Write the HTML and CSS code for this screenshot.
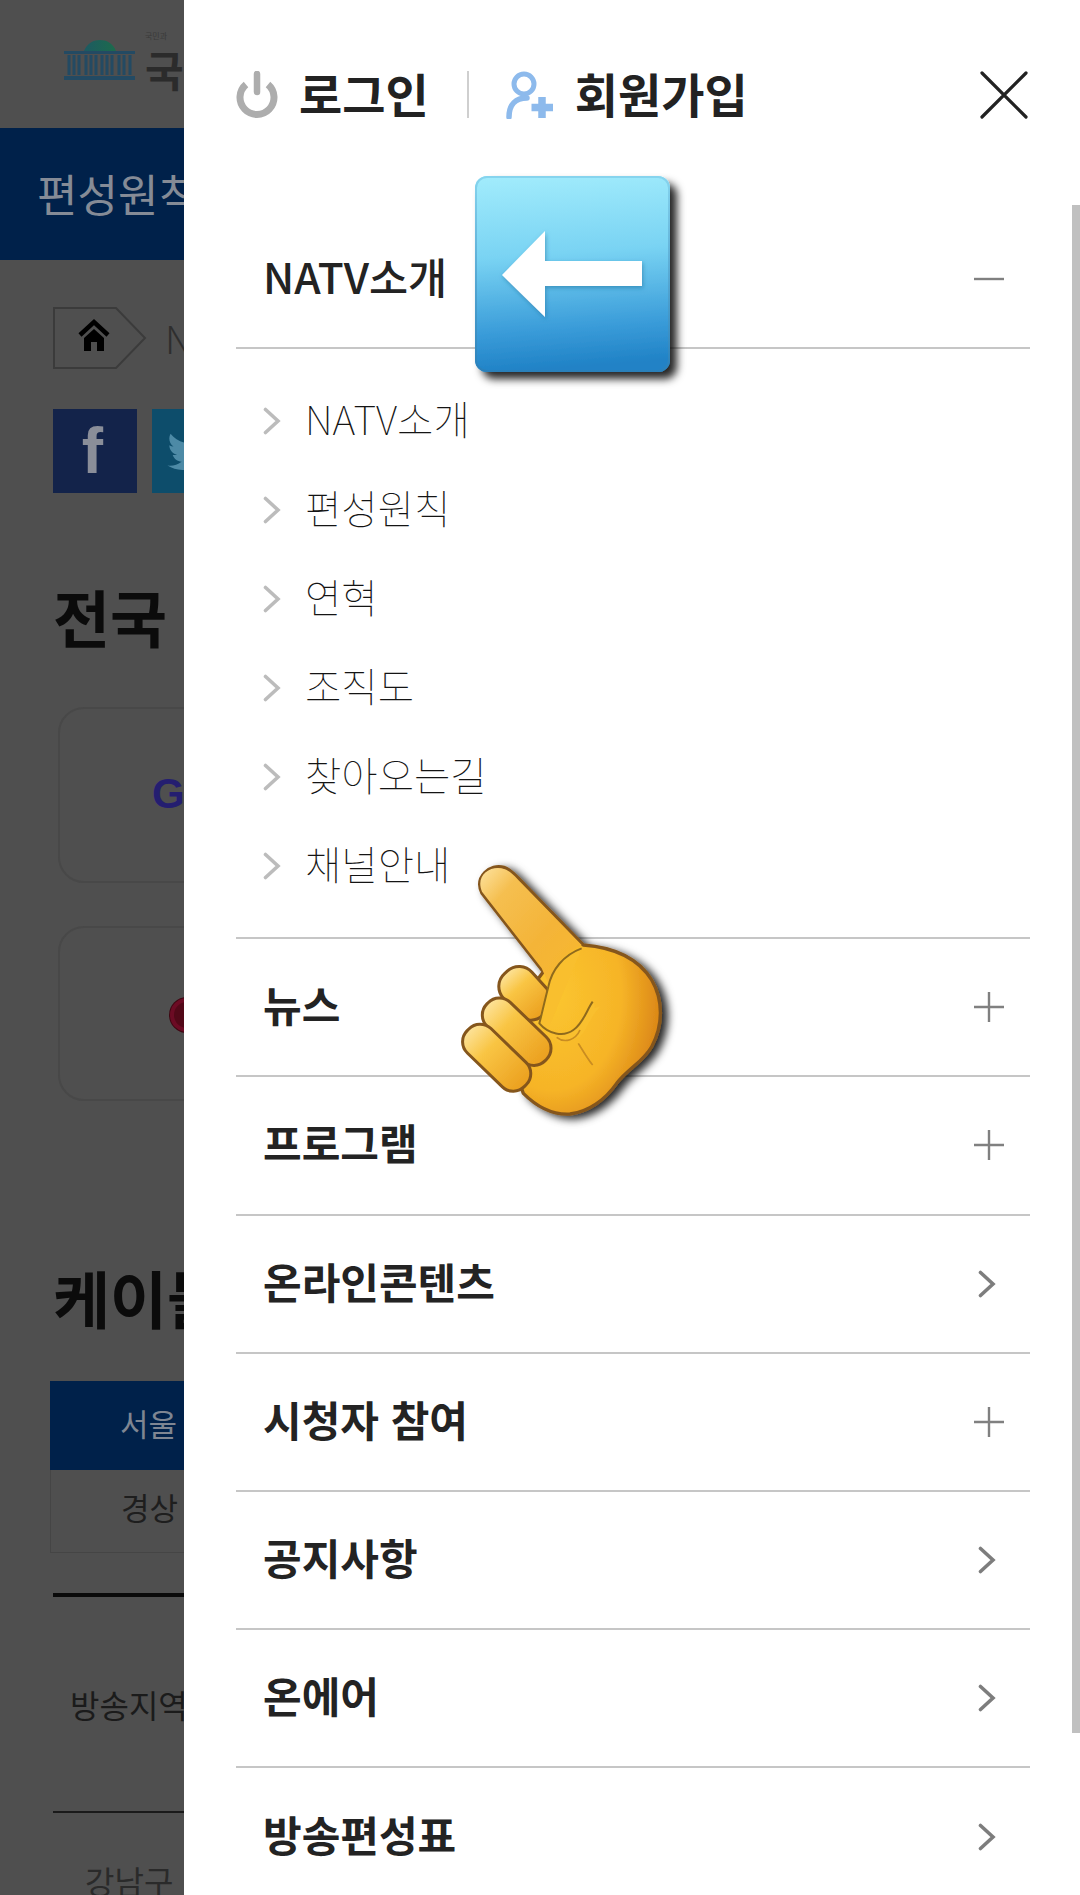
FILE: index.html
```html
<!DOCTYPE html>
<html lang="ko">
<head>
<meta charset="utf-8">
<title>NATV</title>
<link rel="stylesheet" href="styles.css">
</head>
<body>
<svg class="sprite" aria-hidden="true">
  <symbol id="plus" viewBox="0 0 30 30"><path d="M0 15H30M15 0V30" stroke="#808080" stroke-width="2.4" fill="none"/></symbol>
  <symbol id="minus" viewBox="0 0 30 30"><path d="M0 15H30" stroke="#808080" stroke-width="2.4" fill="none"/></symbol>
  <symbol id="chev" viewBox="0 0 18 28"><path d="M2.5 2.5L15 14L2.5 25.5" stroke="#7d7d7d" stroke-width="3.6" fill="none" stroke-linecap="round"/></symbol>
  <symbol id="chev-light" viewBox="0 0 18 28"><path d="M2.5 2.5L15 14L2.5 25.5" stroke="#bcbcbc" stroke-width="3.6" fill="none" stroke-linecap="round"/></symbol>
</svg>
<div class="screen">
  <div class="behind">
    <div class="behind-inner">
      <div class="site-head">
        <svg class="logo-mark" viewBox="0 0 71 41">
          <defs><linearGradient id="dome" x1="0" y1="0" x2="1" y2="0"><stop offset="0" stop-color="#1d5a62"/><stop offset="1" stop-color="#1c6b4c"/></linearGradient></defs>
          <path d="M20 12C23 4 30 1 36 1C42 1 49 4 52 12Z" fill="url(#dome)"/>
          <path d="M0 12H71V15H0ZM0 37H71V41H0Z" fill="#234a63"/>
          <path d="M5 16V36M10 16V36M15 16V36M22 16V36M27 16V36M32 16V36M38 16V36M43 16V36M48 16V36M55 16V36M60 16V36M66 16V36" stroke="#234a63" stroke-width="3"/>
        </svg>
        <div class="logo-text">
          <span class="logo-small">국민과</span>
          <span class="logo-big">국회</span>
        </div>
      </div>
      <div class="sub-title">편성원칙</div>
      <div class="crumb">
        <svg class="crumb-home" viewBox="0 0 94 62">
          <path d="M1 1H63L92 31L63 61H1Z" fill="none" stroke="#3b3b3b" stroke-width="2"/>
          <path d="M27 28L41 15L55 28" fill="none" stroke="#000" stroke-width="4.500"/>
          <path d="M31 31L41 22L51 31V44H44V35H38V44H31Z" fill="#000"/>
        </svg>
        <span class="crumb-text">NATV</span>
      </div>
      <div class="social">
        <div class="sns sns-fb">f</div>
        <div class="sns sns-tw">
          <svg class="bird" viewBox="0 0 24 24"><path d="M23 5c-.8.4-1.700.6-2.600.7.900-.6 1.600-1.400 2-2.500-.9.500-1.900.9-2.900 1.100A4.600 4.600 0 0 0 11.700 8.500C7.900 8.300 4.500 6.500 2.200 3.700c-1.200 2-.6 4.700 1.400 6.100-.7 0-1.400-.2-2-.6 0 2.200 1.500 4.100 3.700 4.600-.7.200-1.400.2-2.100.1.600 1.800 2.300 3.100 4.300 3.200A9.300 9.300 0 0 1 .7 19c2.100 1.300 4.500 2.100 7.100 2.100 8.500 0 13.300-7.200 13-13.600.9-.7 1.700-1.500 2.200-2.500z" fill="#4d8aa6"/></svg>
        </div>
      </div>
      <h2 class="big-title">전국</h2>
      <div class="so-card"><span class="g-mark">G</span></div>
      <div class="so-card so-card-2"><span class="red-mark"></span></div>
      <h2 class="big-title cable-title">케이블</h2>
      <div class="tabs">
        <div class="tab tab-on">서울</div>
        <div class="tab">경상</div>
      </div>
      <div class="table-head">방송지역</div>
      <div class="table-cell">강남구</div>
    </div>
  </div>

  <aside class="drawer">
    <header class="drawer-head">
      <svg class="ico-power" viewBox="0 0 42 47">
        <path d="M10 13.500A17 17 0 1 0 32 13.500" fill="none" stroke="#adadad" stroke-width="7"/>
        <path d="M21 3V21" stroke="#adadad" stroke-width="6.500" stroke-linecap="round"/>
      </svg>
      <a class="head-link head-login">로그인</a>
      <span class="head-sep"></span>
      <svg class="ico-join" viewBox="0 0 48 48">
        <circle cx="18" cy="13" r="10" fill="none" stroke="#8dbaec" stroke-width="5"/>
        <path d="M3 46C3 33 10 27 21 27" fill="none" stroke="#8dbaec" stroke-width="5.500" stroke-linecap="round"/>
        <path d="M36 26V47M25.500 36.500H47" stroke="#8dbaec" stroke-width="7.500"/>
      </svg>
      <a class="head-link head-join">회원가입</a>
      <svg class="ico-close" viewBox="0 0 48 48"><path d="M2 2L46 46M46 2L2 46" stroke="#222" stroke-width="3.200" stroke-linecap="round"/></svg>
    </header>

    <ul class="menu">
      <li class="row row-open"><span class="row-label row-label-medium">NATV소개</span><svg class="ico-pm"><use href="#minus"/></svg></li>
      <li class="subs">
        <a class="sub"><svg class="ico-sub"><use href="#chev-light"/></svg><span class="sub-label">NATV소개</span></a>
        <a class="sub"><svg class="ico-sub"><use href="#chev-light"/></svg><span class="sub-label">편성원칙</span></a>
        <a class="sub"><svg class="ico-sub"><use href="#chev-light"/></svg><span class="sub-label">연혁</span></a>
        <a class="sub"><svg class="ico-sub"><use href="#chev-light"/></svg><span class="sub-label">조직도</span></a>
        <a class="sub"><svg class="ico-sub"><use href="#chev-light"/></svg><span class="sub-label">찾아오는길</span></a>
        <a class="sub"><svg class="ico-sub"><use href="#chev-light"/></svg><span class="sub-label">채널안내</span></a>
      </li>
      <li class="row"><span class="row-label">뉴스</span><svg class="ico-pm"><use href="#plus"/></svg></li>
      <li class="row"><span class="row-label">프로그램</span><svg class="ico-pm"><use href="#plus"/></svg></li>
      <li class="row"><span class="row-label">온라인콘텐츠</span><svg class="ico-go"><use href="#chev"/></svg></li>
      <li class="row"><span class="row-label">시청자 참여</span><svg class="ico-pm"><use href="#plus"/></svg></li>
      <li class="row"><span class="row-label">공지사항</span><svg class="ico-go"><use href="#chev"/></svg></li>
      <li class="row"><span class="row-label">온에어</span><svg class="ico-go"><use href="#chev"/></svg></li>
      <li class="row row-last"><span class="row-label">방송편성표</span><svg class="ico-go"><use href="#chev"/></svg></li>
    </ul>

    <div class="scrollbar"></div>

    <svg class="emoji-arrow" viewBox="0 0 220 220">
      <defs>
        <linearGradient id="btn" x1="0.05" y1="0" x2="0.12" y2="1">
          <stop offset="0" stop-color="#a2ecfc"/><stop offset=".42" stop-color="#79d3f3"/><stop offset=".8" stop-color="#3a9cd9"/><stop offset="1" stop-color="#2082c6"/>
        </linearGradient>
        <linearGradient id="btn-edge" x1="0" y1="0" x2="0" y2="1">
          <stop offset="0" stop-color="#86d4ee"/><stop offset="1" stop-color="#2a80ba"/>
        </linearGradient>
        <filter id="btn-shadow" x="-10%" y="-10%" width="125%" height="125%"><feDropShadow dx="7" dy="7" stdDeviation="4" flood-color="#000" flood-opacity=".85"/></filter>
        <filter id="arrow-soft" x="-10%" y="-20%" width="120%" height="140%"><feDropShadow dx="1" dy="2" stdDeviation="2" flood-color="#1d6f9c" flood-opacity=".55"/></filter>
      </defs>
      <rect x="0" y="0" width="195" height="196" rx="12" fill="url(#btn)" filter="url(#btn-shadow)"/>
      <rect x="1" y="1" width="193" height="194" rx="11" fill="none" stroke="url(#btn-edge)" stroke-width="2"/>
      <path d="M27 99L70 55V85H167V110H70V141Z" fill="#fff" filter="url(#arrow-soft)"/>
    </svg>

    <svg class="emoji-hand" viewBox="0 0 960 960">
      <defs>
        <radialGradient id="palm" cx=".4" cy=".52" r=".62">
          <stop offset="0" stop-color="#fbc630"/><stop offset=".62" stop-color="#f6b427"/><stop offset="1" stop-color="#d98316"/>
        </radialGradient>
        <linearGradient id="idx" x1="0" y1="0" x2="1" y2="1">
          <stop offset="0" stop-color="#fde3a0"/><stop offset=".22" stop-color="#f5bf50"/><stop offset=".6" stop-color="#f4b438"/><stop offset="1" stop-color="#f8b92d"/>
        </linearGradient>
        <linearGradient id="fing" x1="0" y1="0" x2="1" y2="0">
          <stop offset="0" stop-color="#fde39a"/><stop offset=".35" stop-color="#f9c544"/><stop offset="1" stop-color="#eb9f1e"/>
        </linearGradient>
        <filter id="hand-shadow" x="-15%" y="-15%" width="135%" height="135%"><feDropShadow dx="18" dy="10" stdDeviation="13" flood-color="#000" flood-opacity=".85"/></filter>
        <filter id="hand-soft"><feGaussianBlur stdDeviation="1.800"/></filter>
      </defs>
      <g filter="url(#hand-shadow)">
        <path d="M370 790L300 600L430 425L246 190C222 140 270 100 312 112C332 118 345 135 360 150L550 345C640 352 715 385 755 450C790 510 790 585 755 650C730 695 685 715 650 760C615 810 565 845 510 852C460 855 410 830 370 790Z" fill="url(#palm)" stroke="#85561c" stroke-width="10" stroke-linejoin="round"/>
      </g>
      <g filter="url(#hand-soft)">
        <path d="M246 185C225 135 272 105 312 117C332 123 345 140 360 155L545 345C490 370 455 420 445 460L425 415Z" fill="url(#idx)"/>
        <rect x="290" y="432" width="170" height="116" rx="52" transform="rotate(48 375 490)" fill="url(#fing)" stroke="#85561c" stroke-width="9"/>
        <rect x="228" y="555" width="244" height="100" rx="47" transform="rotate(44 350 605)" fill="url(#fing)" stroke="#85561c" stroke-width="9"/>
        <rect x="170" y="632" width="240" height="102" rx="47" transform="rotate(44 290 683)" fill="url(#fing)" stroke="#85561c" stroke-width="9"/>
        <path d="M545 355C490 375 455 420 445 470C432 520 425 555 418 580C445 612 490 622 520 600C550 580 560 540 578 515C590 530 570 540 600 530C570 560 560 600 540 620L480 640L440 610Z" fill="#f9bf2e"/>
        <path d="M545 355C490 375 455 420 445 470C432 520 425 555 418 580C445 612 490 622 520 600C550 580 560 540 578 515" fill="none" stroke="#8f6a1e" stroke-width="6" stroke-linejoin="round"/>
        <path d="M470 622C495 642 528 628 540 600M535 640C552 668 565 690 578 705" fill="none" stroke="#c98c20" stroke-width="5"/>
      </g>
    </svg>
  </aside>
</div>
</body>
</html>
```
FILE: styles.css
```css
* { box-sizing: border-box; }
html, body { margin: 0; padding: 0; }
body {
  width: 1080px;
  height: 1895px;
  overflow: hidden;
  font-family: "Noto Sans CJK KR", "Noto Sans", sans-serif;
  background: #4f4f4f;
  color: #222;
}
.sprite { display: none; }
.screen { display: grid; grid-template-columns: 184px 896px; height: 1895px; }

/* dimmed page behind the drawer */
.behind { overflow: hidden; height: 1895px; background: #4f4f4f; }
.behind-inner { width: 700px; }
.site-head { height: 128px; padding: 39px 0 0 64px; display: flex; gap: 10px; }
.logo-mark { width: 71px; height: 41px; flex: none; }
.logo-text { display: flex; flex-direction: column; margin-top: -13px; }
.logo-small { font-size: 8px; line-height: 20px; color: #3a3a3a; }
.logo-big { font-size: 42px; line-height: 46px; font-weight: 700; color: #2b2b2b; letter-spacing: 2px; }
.sub-title { height: 132px; line-height: 130px; padding-left: 37px; background: #00214a; color: #858b96; font-size: 44px; font-weight: 400; }
.crumb { display: flex; align-items: center; margin: 47px 0 0 53px; height: 62px; gap: 18px; }
.crumb-home { width: 94px; height: 62px; flex: none; }
.crumb-text { font-size: 38px; line-height: 62px; color: #2e2e2e; font-weight: 300; }
.social { display: flex; gap: 15px; margin: 40px 0 0 53px; }
.sns { width: 84px; height: 84px; }
.sns-fb { background: #13234a; color: #8a8e99; font: 700 64px/84px "Liberation Sans", sans-serif; text-align: center; padding-right: 5px; }
.sns-tw { background: #0d4d6b; padding: 17px 0 0 14px; }
.bird { width: 50px; height: 50px; display: block; }
.big-title { margin: 88px 0 0 53px; font-size: 62px; line-height: 70px; font-weight: 700; color: #0b0b0b; letter-spacing: 0; }
.so-card { margin: 56px 0 0 58px; width: 400px; height: 176px; border: 2px solid #484848; border-radius: 26px; padding: 62px 0 0 92px; }
.so-card-2 { margin-top: 43px; height: 175px; padding: 70px 0 0 110px; }
.g-mark { font: 700 42px/46px "Liberation Sans", sans-serif; color: #241e70; }
.red-mark { display: block; width: 34px; height: 34px; border-radius: 50%; background: #520818; border: 4px solid #6c0b24; box-shadow: 0 0 0 1px #3f0712; }
.cable-title { margin-top: 161px; }
.tabs { margin: 49px 0 0 50px; width: 400px; }
.tab { height: 83px; border: 1px solid #454545; border-top: 0; text-align: left; padding-left: 70px; font-size: 31px; line-height: 74px; color: #1e1e1e; }
.tab-on { height: 89px; border: 0; background: #00214a; color: #7f8692; line-height: 84px; }
.table-head { margin: 40px 0 0 53px; width: 500px; height: 220px; border-top: 4px solid #0a0a0a; border-bottom: 2px solid #1a1a1a; padding-left: 17px; font-size: 32px; line-height: 214px; color: #1b1b1b; }
.table-cell { padding-left: 85px; margin-top: 44px; font-size: 32px; line-height: 46px; color: #2a2a2a; }

/* drawer */
.drawer { position: relative; height: 1895px; background: #fff; padding: 0 50px 0 52px; overflow: hidden; }
.drawer-head { height: 211px; display: flex; align-items: flex-start; padding-top: 71px; }
.ico-power { width: 42px; height: 47px; flex: none; }
.head-link { font-size: 47px; line-height: 44px; font-weight: 700; color: #222; }
.head-login { margin-left: 21px; }
.head-sep { width: 2px; height: 47px; background: #cfcfcf; margin-left: 38px; flex: none; }
.ico-join { width: 48px; height: 48px; margin-left: 37px; flex: none; }
.head-join { margin-left: 21px; }
.ico-close { width: 48px; height: 48px; margin-left: auto; margin-right: 2px; flex: none; }

.menu { list-style: none; margin: 0; padding: 0; }
.row { height: 138.2px; border-bottom: 2px solid #c6c6c6; display: flex; align-items: center; justify-content: space-between; padding: 0 20px 0 27px; }
.row-last { border-bottom: 0; }
.row-label { font-size: 42px; line-height: 50px; padding-bottom: 6px; font-weight: 700; color: #232323; }
.row-label-medium { font-weight: 500; font-size: 42.5px; padding-bottom: 7px; }
.ico-pm { width: 30px; height: 30px; flex: none; margin-right: 6px; }
.ico-go { width: 18px; height: 28px; flex: none; margin-right: 14px; }
.subs { padding: 27px 0; border-bottom: 2px solid #c6c6c6; }
.sub { display: flex; align-items: center; height: 89px; padding-left: 27px; }
.sub-label { font-size: 39.500px; line-height: 50px; padding-bottom: 5px; font-weight: 100; color: #141414; }
.ico-sub { width: 18px; height: 28px; margin-right: 24px; flex: none; }

/* overlays */
.scrollbar { position: absolute; right: 0; top: 205px; width: 8px; height: 1528px; background: #c0c0c0; }
.emoji-arrow { position: absolute; left: 291px; top: 176px; width: 220px; height: 220px; overflow: visible; }
.emoji-hand { position: absolute; left: 216px; top: 830px; width: 320px; height: 320px; }
```
